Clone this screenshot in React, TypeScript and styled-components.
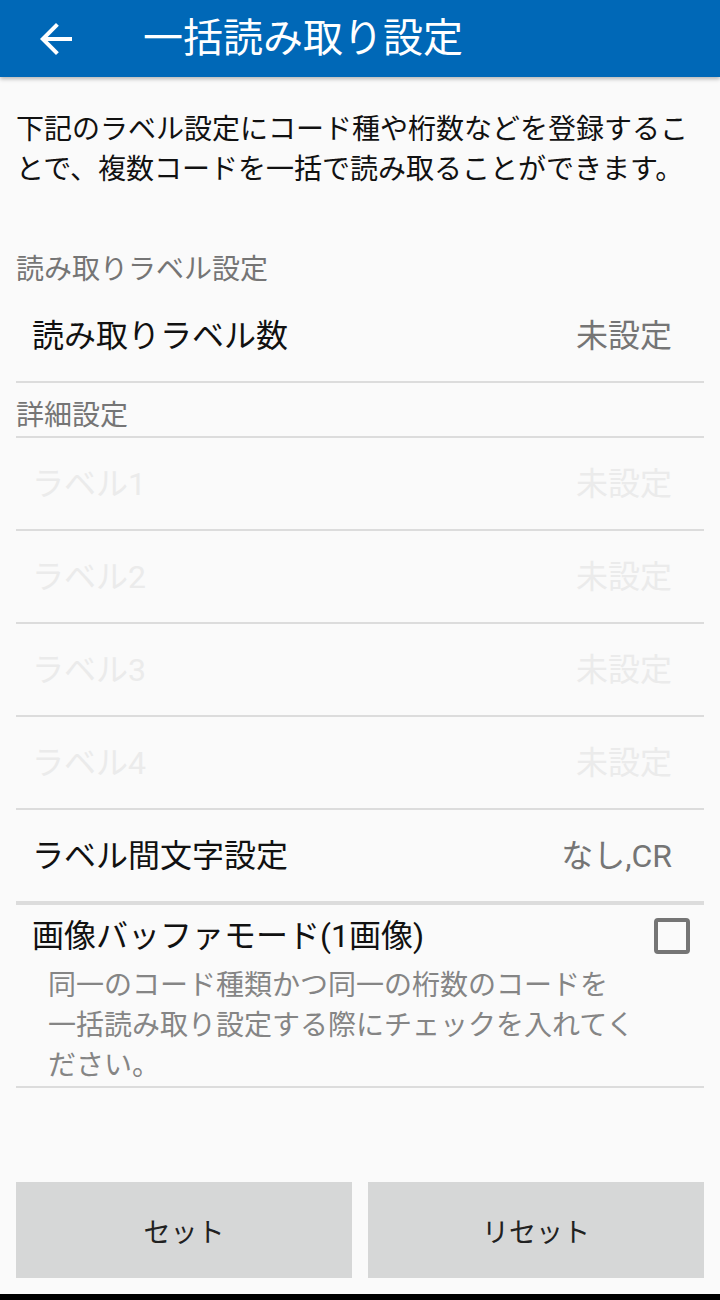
import styled, { createGlobalStyle } from "styled-components";

const GlobalStyle = createGlobalStyle`
  html, body {
    margin: 0;
    padding: 0;
    background: #fafafa;
  }
  body {
    font-family: Roboto, "Noto Sans CJK JP", "Noto Sans", sans-serif;
  }
`;

const Page = styled.div`
  width: 720px;
  min-height: 1300px;
  display: flex;
  flex-direction: column;
  background: #fafafa;
`;

const AppBar = styled.header`
  height: 77px;
  background: #0068b7;
  display: flex;
  align-items: center;
  box-shadow: 0 2px 4px rgba(0, 0, 0, 0.28);
  position: relative;
  z-index: 1;
`;

const BackButton = styled.button`
  width: 48px;
  height: 48px;
  margin-left: 32px;
  padding: 0;
  border: 0;
  background: transparent;
  display: flex;
  align-items: center;
  justify-content: center;
`;

const Title = styled.h1`
  margin: 0 0 0 63px;
  font-size: 40px;
  font-weight: 400;
  color: #ffffff;
  line-height: 1;
`;

const Content = styled.main`
  flex: 1;
  padding: 33px 16px 0;
`;

const Intro = styled.p`
  margin: 0;
  font-size: 28px;
  line-height: 40px;
  color: #111;
`;

const SectionHeader = styled.div<{ $top: number }>`
  padding-top: ${(p) => p.$top}px;
  font-size: 28px;
  line-height: 40px;
  color: #757575;
`;

const Divider = styled.div<{ $size?: number }>`
  height: ${(p) => p.$size ?? 2}px;
  background: #dcdcdc;
`;

const Row = styled.div<{ $disabled?: boolean }>`
  height: 91px;
  box-sizing: border-box;
  padding: 0 32px 6px 16px;
  display: flex;
  align-items: center;
  justify-content: space-between;
  font-size: 32px;
  color: ${(p) => (p.$disabled ? "#ebebeb" : "#111")};
`;

const RowValue = styled.span<{ $disabled?: boolean }>`
  color: ${(p) => (p.$disabled ? "#ebebeb" : "#757575")};
`;

const CheckRow = styled.div`
  padding: 11px 14px 0 16px;
`;

const CheckHead = styled.div`
  display: flex;
  align-items: center;
  justify-content: space-between;
  font-size: 32px;
  line-height: 40px;
  color: #111;
`;

const CheckBox = styled.span`
  width: 36px;
  height: 36px;
  box-sizing: border-box;
  border: 4px solid #757575;
  border-radius: 4px;
`;

const Description = styled.p`
  margin: 10px 0 0 16px;
  max-width: 600px;
  font-size: 28px;
  line-height: 40px;
  color: #858585;
`;

const Footer = styled.footer`
  display: grid;
  grid-template-columns: 1fr 1fr;
  gap: 16px;
  padding: 0 16px 16px;
`;

const ActionButton = styled.button`
  height: 96px;
  border: 0;
  border-radius: 0;
  background: #d6d7d7;
  font-family: inherit;
  font-size: 27px;
  color: #212121;
`;

const NavStrip = styled.div`
  height: 6px;
  background: #000;
`;

const labels = ["ラベル1", "ラベル2", "ラベル3", "ラベル4"];

export default function App() {
  return (
    <Page>
      <GlobalStyle />
      <AppBar>
        <BackButton aria-label="戻る">
          <svg width="48" height="48" viewBox="0 0 24 24" fill="#fff">
            <path d="M20 11H7.83l5.59-5.59L12 4l-8 8 8 8 1.41-1.41L7.83 13H20v-2z" />
          </svg>
        </BackButton>
        <Title>一括読み取り設定</Title>
      </AppBar>
      <Content>
        <Intro>
          下記のラベル設定にコード種や桁数などを登録することで、複数コードを一括で読み取ることができます。
        </Intro>
        <SectionHeader $top={60}>読み取りラベル設定</SectionHeader>
        <Row>
          <span>読み取りラベル数</span>
          <RowValue>未設定</RowValue>
        </Row>
        <Divider />
        <SectionHeader $top={13}>詳細設定</SectionHeader>
        <Divider />
        {labels.map((l) => (
          <div key={l}>
            <Row $disabled>
              <span>{l}</span>
              <RowValue $disabled>未設定</RowValue>
            </Row>
            <Divider />
          </div>
        ))}
        <Row>
          <span>ラベル間文字設定</span>
          <RowValue>なし,CR</RowValue>
        </Row>
        <Divider $size={4} />
        <CheckRow>
          <CheckHead>
            <span>画像バッファモード(1画像)</span>
            <CheckBox />
          </CheckHead>
          <Description>
            同一のコード種類かつ同一の桁数のコードを
            <br />
            一括読み取り設定する際にチェックを入れてください。
          </Description>
        </CheckRow>
        <Divider />
      </Content>
      <Footer>
        <ActionButton>セット</ActionButton>
        <ActionButton>リセット</ActionButton>
      </Footer>
      <NavStrip />
    </Page>
  );
}
